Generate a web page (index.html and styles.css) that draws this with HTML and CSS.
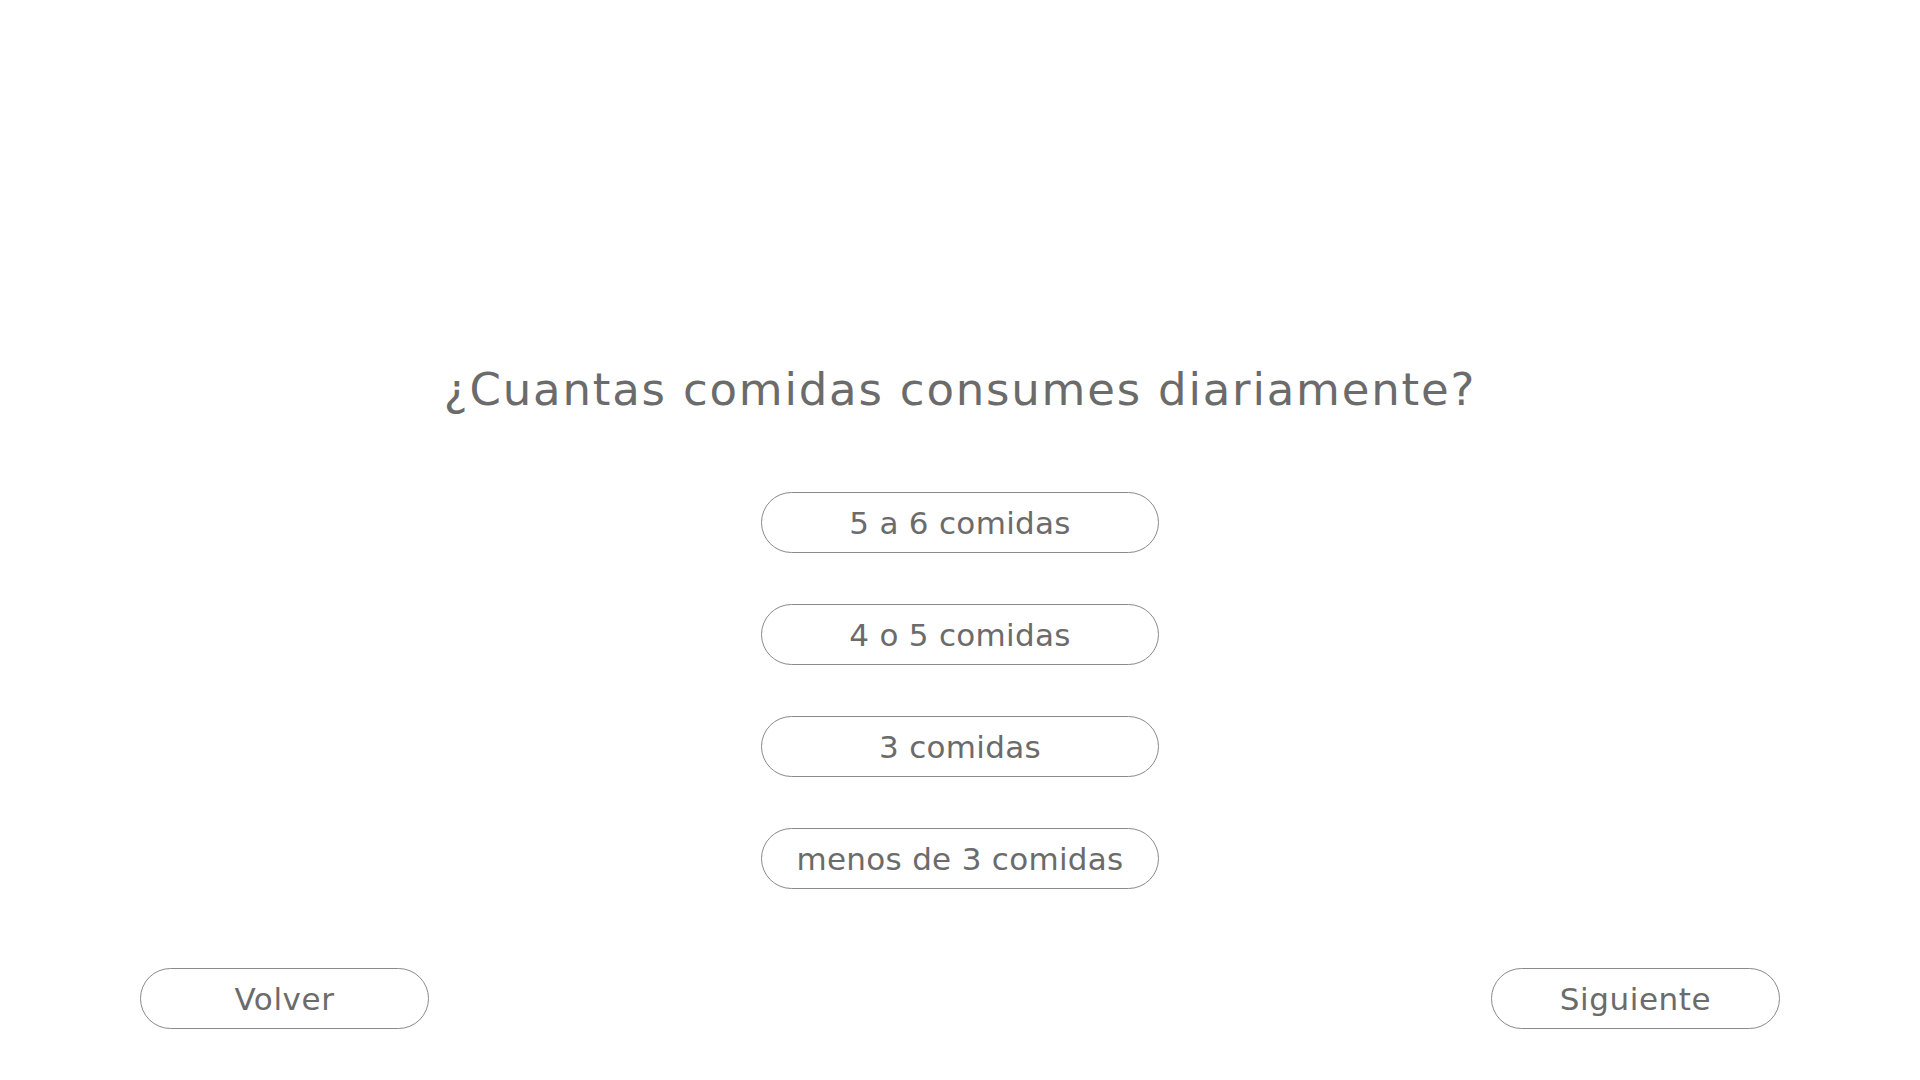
FILE: index.html
```html
<!DOCTYPE html>
<html lang="es">
<head>
<meta charset="utf-8">
<title>Encuesta</title>
<link rel="stylesheet" href="styles.css">
</head>
<body>
<main class="page">
  <h1 class="question">¿Cuantas comidas consumes diariamente?</h1>
  <div class="options">
    <button class="pill option">5 a 6 comidas</button>
    <button class="pill option">4 o 5 comidas</button>
    <button class="pill option">3 comidas</button>
    <button class="pill option">menos de 3 comidas</button>
  </div>
  <nav class="nav">
    <button class="pill navbtn">Volver</button>
    <button class="pill navbtn">Siguiente</button>
  </nav>
</main>
</body>
</html>
```
FILE: styles.css
```css
html, body {
  margin: 0;
  padding: 0;
  background: #ffffff;
}
.page {
  box-sizing: border-box;
  width: 1920px;
  height: 1080px;
  padding-top: 362px;
  display: flex;
  flex-direction: column;
  align-items: center;
  font-family: "DejaVu Sans", sans-serif;
  color: #6b6b6b;
}
.question {
  margin: 0;
  font-size: 45px;
  line-height: 56px;
  font-weight: normal;
  letter-spacing: 1.8px;
  color: #6b6b6b;
}
.options {
  margin-top: 74px;
  display: flex;
  flex-direction: column;
  gap: 51px;
}
.pill {
  box-sizing: border-box;
  height: 61px;
  border: 1px solid #8a8a8a;
  border-radius: 31px;
  background: #ffffff;
  font-family: inherit;
  color: #6b6b6b;
  font-size: 31px;
  letter-spacing: 0.3px;
  padding: 0;
  display: flex;
  align-items: center;
  justify-content: center;
}
.option {
  width: 398px;
}
.nav {
  margin-top: 79px;
  width: 100%;
  box-sizing: border-box;
  padding: 0 140px 0 140px;
  display: flex;
  justify-content: space-between;
}
.navbtn {
  width: 289px;
  letter-spacing: 0.6px;
}
```
